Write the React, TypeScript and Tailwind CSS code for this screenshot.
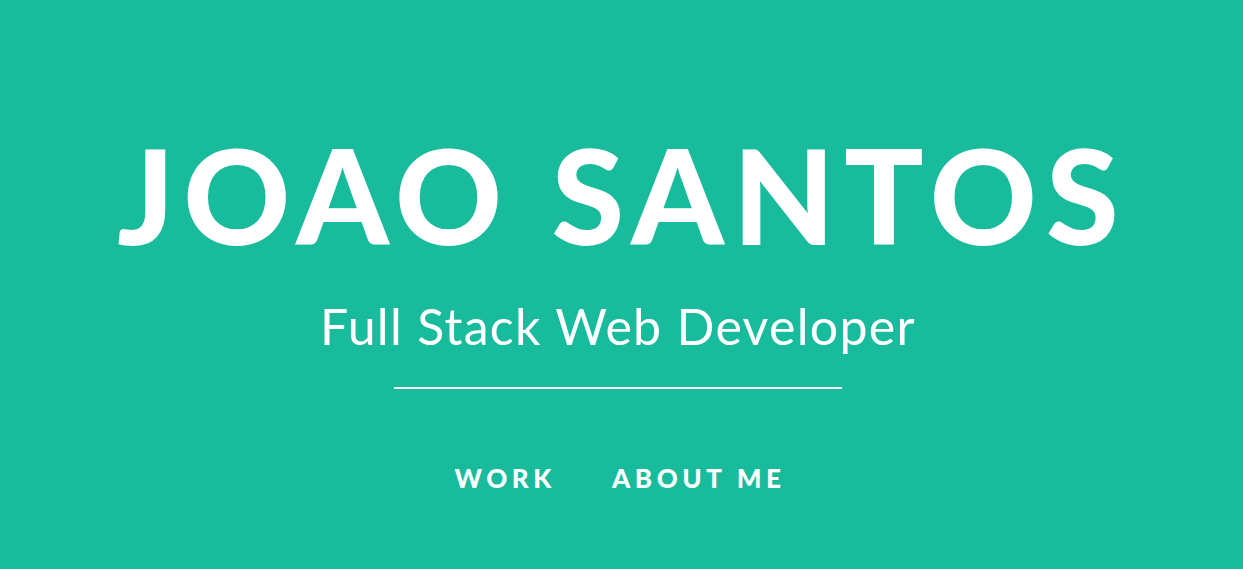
export default function App() {
  return (
    <div className="w-full h-[569px] bg-[#18bc9c] pr-[7px] flex flex-col items-center text-white">
      <h1 className="mt-[124px] pl-[9px] font-['Lato',sans-serif] font-black text-[132px] leading-[140px] tracking-[9px] uppercase">
        Joao Santos
      </h1>
      <p className="mt-[32px] font-['Lato',sans-serif] text-[50px] leading-[60px] tracking-[1.3px]">Full Stack Web Developer</p>
      <hr className="mt-[31px] w-[448px] border-t-2 border-white" />
      <nav className="mt-[74px] pl-[4px] flex gap-[56px] font-['Lato',sans-serif] font-black text-[26px] leading-[30px] tracking-[4.6px] uppercase">
        <a href="#work">Work</a>
        <a href="#about">About Me</a>
      </nav>
    </div>
  );
}
